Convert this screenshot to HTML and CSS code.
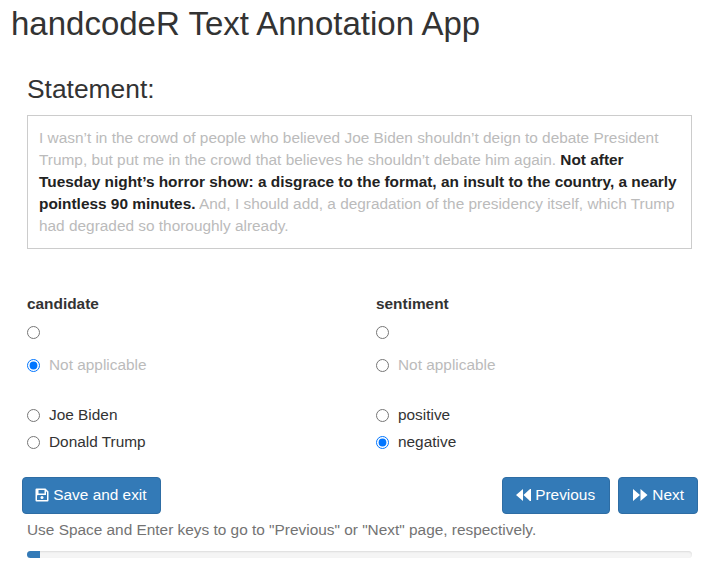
FILE: index.html
```html
<!DOCTYPE html>
<html lang="en">
<head>
  <meta charset="UTF-8">
  <meta name="viewport" content="width=device-width, initial-scale=1.0">
  <title>handcodeR Text Annotation App</title>
  <link rel="stylesheet" href="styles.css">
</head>
<body>
  <h2 class="app-title">handcodeR Text Annotation App</h2>
  <div class="container">
    <h3 class="statement-title">Statement:</h3>
    <div class="statement">
      <span class="muted">I wasn’t in the crowd of people who believed Joe Biden shouldn’t deign to debate President Trump, but put me in the crowd that believes he shouldn’t debate him again.</span>
      <strong>Not after Tuesday night’s horror show: a disgrace to the format, an insult to the country, a nearly pointless 90 minutes.</strong>
      <span class="muted">And, I should add, a degradation of the presidency itself, which Trump had degraded so thoroughly already.</span>
    </div>

    <div class="questions">
      <div class="question">
        <div class="question-label">candidate</div>
        <label class="radio radio-empty"><input type="radio" name="candidate"></label>
        <label class="radio radio-na"><input type="radio" name="candidate" checked><span class="muted">Not applicable</span></label>
        <label class="radio"><input type="radio" name="candidate"><span>Joe Biden</span></label>
        <label class="radio"><input type="radio" name="candidate"><span>Donald Trump</span></label>
      </div>
      <div class="question">
        <div class="question-label">sentiment</div>
        <label class="radio radio-empty"><input type="radio" name="sentiment"></label>
        <label class="radio radio-na"><input type="radio" name="sentiment"><span class="muted">Not applicable</span></label>
        <label class="radio"><input type="radio" name="sentiment"><span>positive</span></label>
        <label class="radio"><input type="radio" name="sentiment" checked><span>negative</span></label>
      </div>
    </div>
  </div>

  <div class="actions">
    <button class="btn">
      <svg class="icon icon-save" viewBox="0 0 14 14"><path fill="currentColor" fill-rule="evenodd" d="M1.5 0.5h9l3 3v9a1 1 0 0 1-1 1h-11a1 1 0 0 1-1-1v-11a1 1 0 0 1 1-1zM3.5 2v3.5h6V2zM2 7.5V12h10V4.2L11 3.2v3.8H3z"/><circle fill="currentColor" cx="7" cy="9.6" r="1.5"/></svg>
      Save and exit
    </button>
    <div class="nav-buttons">
      <button class="btn btn-prev">
        <svg class="icon icon-wide" viewBox="0 0 16 12"><path fill="currentColor" d="M8 0v12L1 6zM15 0v12L8.5 6zM14.5 0H16v12h-1.500z"/></svg>
        Previous
      </button>
      <button class="btn">
        <svg class="icon icon-wide" viewBox="0 0 16 12"><path fill="currentColor" d="M1 0v12l7-6zM8.500 0v12L15.500 6z"/></svg>
        Next
      </button>
    </div>
  </div>

  <div class="container">
    <p class="help">Use Space and Enter keys to go to "Previous" or "Next" page, respectively.</p>
    <div class="progress"><div class="progress-bar" style="width: 2%"></div></div>
  </div>
</body>
</html>
```

FILE: styles.css
```css
body {
  margin: 0;
  font-family: "Liberation Sans", Arial, sans-serif;
  font-size: 15.4px;
  line-height: 22px;
  color: #333;
  background-color: #fff;
}

.app-title {
  margin: 0;
  padding: 6px 11px 0;
  font-size: 33px;
  line-height: 36px;
  font-weight: 400;
}

.container {
  padding: 0 23px 0 27px;
}

.statement-title {
  margin: 33px 0 0;
  font-size: 26.4px;
  line-height: 29px;
  font-weight: 400;
}

.statement {
  margin-top: 11px;
  padding: 11px;
  border: 1px solid #ccc;
  color: #222;
}

.statement strong {
  font-weight: 700;
}

.muted {
  color: #bbb;
}

.questions {
  display: grid;
  grid-template-columns: 349px 1fr;
  margin-top: 44px;
}

.question-label {
  font-weight: 700;
  color: #333;
  margin-bottom: 6px;
}

.radio {
  display: flex;
  align-items: center;
  gap: 9px;
  height: 22px;
  margin-bottom: 5px;
}

.radio input {
  margin: 0;
  flex: none;
}

.radio-na {
  margin-top: 11px;
  margin-bottom: 28px;
}

.actions {
  display: flex;
  justify-content: space-between;
  margin-top: 19px;
  padding: 0 17px 0 22px;
}

.nav-buttons {
  display: flex;
  gap: 8px;
}

.btn {
  height: 37px;
  padding: 0 13px 2px;
  font-family: inherit;
  font-size: 15.4px;
  color: #fff;
  background-color: #337ab7;
  border: 1px solid #2e6da4;
  border-radius: 4px;
}

.btn-prev {
  padding-right: 14px;
}

.btn-prev .icon {
  margin-left: -1px;
}

.icon {
  width: 14px;
  height: 14px;
  vertical-align: -2px;
}

.icon-save {
  margin-left: -1px;
}

.icon-wide {
  width: 16px;
  height: 12px;
  vertical-align: -1px;
}

.help {
  margin: 5px 0 0;
  color: #737373;
}

.progress {
  height: 7px;
  margin-top: 10px;
  overflow: hidden;
  background-color: #f5f5f5;
  border-radius: 4px;
  box-shadow: inset 0 1px 2px rgba(0, 0, 0, 0.1);
}

.progress-bar {
  height: 100%;
  background-color: #337ab7;
}
```
